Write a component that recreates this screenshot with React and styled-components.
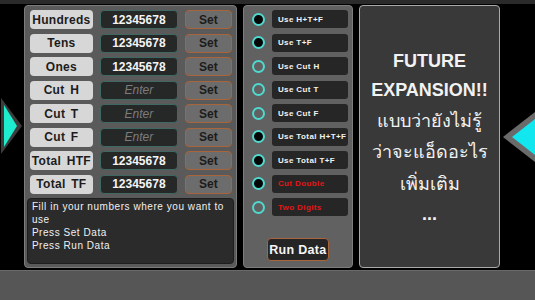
import React from 'react'
import styled, { createGlobalStyle } from 'styled-components'

const GlobalStyle = createGlobalStyle`
    html, body {
        margin: 0;
        padding: 0;
        background: #000000;
    }
    * {
        box-sizing: border-box;
    }
`;

const StyledScreen = styled.div`
    display: flex;
    flex-direction: column;
    width: 535px;
    height: 300px;
    background-color: #000000;
    font-family: "Liberation Sans", "Noto Sans", sans-serif;
    overflow: hidden;
`;

const StyledTopBar = styled.div`
    height: 4px;
    background-color: #2a2a2a;
`;

const StyledMain = styled.div`
    display: flex;
    height: 264px;
    padding-top: 1px;
`;

const StyledBottomBar = styled.div`
    flex: 1;
    margin-top: 2px;
    background-color: #565656;
    border-top: 1px solid #6a6a6a;
`;

const StyledArrowSlot = styled.div`
    display: flex;
    justify-content: ${props => props.$side === 'left' ? 'flex-start' : 'flex-end'};
    width: ${props => props.$width}px;
    padding-top: ${props => props.$top}px;
`;

const StyledPanel = styled.section`
    display: flex;
    flex-direction: column;
    width: ${props => props.$width}px;
    margin-right: ${props => props.$gap || 0}px;
    border: 1px solid ${props => props.$border};
    border-radius: 4px;
    background-color: ${props => props.$bg};
`;

const StyledLeftPanel = styled(StyledPanel)`
    padding: 4px 4px 3px 5px;
    gap: 4.5px;
`;

const StyledInputRow = styled.div`
    display: flex;
    align-items: center;
    gap: 7px;
    height: 19px;
`;

const StyledLabelButton = styled.div`
    display: flex;
    align-items: center;
    justify-content: center;
    width: 63px;
    height: 19px;
    border-radius: 4px;
    background-color: #d7d7d7;
    color: #1c1c1c;
    font-size: 12px;
    font-weight: bold;
    letter-spacing: 0.3px;
    word-spacing: 2px;
`;

const StyledNumberBox = styled.div`
    display: flex;
    align-items: center;
    justify-content: center;
    width: 78px;
    height: 19px;
    border: 1px solid #3f6862;
    border-radius: 4px;
    background-color: #262727;
    color: ${props => props.$empty ? '#7d7d7d' : '#f4f4f4'};
    font-size: 12px;
    font-weight: ${props => props.$empty ? 'normal' : 'bold'};
    font-style: ${props => props.$empty ? 'italic' : 'normal'};
`;

const StyledSetButton = styled.div`
    display: flex;
    align-items: center;
    justify-content: center;
    width: 47px;
    height: 19px;
    border: 1px solid #a8643a;
    border-radius: 4px;
    background-color: #6c6c6c;
    color: #1c1c1c;
    font-size: 12px;
    font-weight: bold;
`;

const StyledHelpBox = styled.div`
    flex: 1;
    margin: 0 -2px 0 -3px;
    padding: 1px 3px 1px 4px;
    border: 1px solid #1e1e1e;
    border-radius: 4px;
    background-color: #2b2b2b;
    color: #f0f0f0;
    font-size: 10px;
    line-height: 13px;
    letter-spacing: 0.55px;
`;

const StyledMidPanel = styled(StyledPanel)`
    padding: 4px 4px 6px 8px;
    gap: 5.5px;
`;

const StyledOptionRow = styled.div`
    display: flex;
    align-items: center;
    gap: 7px;
    height: 18px;
`;

const StyledRadio = styled.div`
    width: 13px;
    height: 13px;
    border: 2px solid #4fd9cf;
    border-radius: 50%;
    background-color: ${props => props.$checked ? '#050505' : 'transparent'};
`;

const StyledOptionLabel = styled.div`
    display: flex;
    align-items: center;
    width: 76px;
    height: 18px;
    padding-left: 6px;
    border-radius: 3px;
    background-color: #262626;
    color: ${props => props.$danger ? '#e01818' : '#f2f2f2'};
    font-size: 8px;
    font-weight: bold;
    letter-spacing: 0.4px;
    white-space: nowrap;
`;

const StyledRunButton = styled.div`
    display: flex;
    align-items: center;
    justify-content: center;
    align-self: flex-start;
    width: 62px;
    height: 23px;
    margin: auto 0 0 15px;
    border: 1px solid #a8643a;
    border-radius: 4px;
    background-color: #252525;
    color: #f6f6f6;
    font-size: 12.5px;
    font-weight: bold;
    letter-spacing: 0.3px;
`;

const StyledRightPanel = styled(StyledPanel)`
    align-items: center;
    padding-top: 41px;
    color: #f2f2f2;
    font-size: 18px;
    font-weight: bold;
    line-height: 29px;
    text-align: center;
`;

const StyledThaiLine = styled.div`
    font-family: "Noto Sans", "DejaVu Sans", sans-serif;
    font-weight: normal;
    font-size: 18px;
    line-height: ${props => props.$lh || 31}px;
`;

const inputRows = [
    {label: 'Hundreds', value: '12345678'},
    {label: 'Tens', value: '12345678'},
    {label: 'Ones', value: '12345678'},
    {label: 'Cut H', value: ''},
    {label: 'Cut T', value: ''},
    {label: 'Cut F', value: ''},
    {label: 'Total HTF', value: '12345678'},
    {label: 'Total TF', value: '12345678'}
];

const options = [
    {label: 'Use H+T+F', checked: true},
    {label: 'Use T+F', checked: true},
    {label: 'Use Cut H', checked: false},
    {label: 'Use Cut T', checked: false},
    {label: 'Use Cut F', checked: false},
    {label: 'Use Total H+T+F', checked: true},
    {label: 'Use Total T+F', checked: true},
    {label: 'Cut Double', checked: true, danger: true},
    {label: 'Two Digits', checked: false, danger: true}
];

const ArrowRight = () => (
    <svg width="23" height="58" viewBox="0 0 23 58">
        <polygon points="1,1 22,29 1,57" fill="#3c3c3c" />
        <polygon points="4,8 17,29 4,50" fill="#1eeccf" />
    </svg>
);

const ArrowLeft = () => (
    <svg width="33" height="50" viewBox="0 0 33 50">
        <polygon points="33,0 1,25 33,50" fill="#6a6a6a" />
        <polygon points="33,7 10,25 33,43" fill="#12e6ef" />
    </svg>
);

const App = () => {
    return (
        <StyledScreen>
            <GlobalStyle />
            <StyledTopBar />
            <StyledMain>
                <StyledArrowSlot $side="left" $width={24} $top={92}>
                    <ArrowRight />
                </StyledArrowSlot>
                <StyledLeftPanel $width={213} $gap={6} $bg="#5a5a5a" $border="#7c7c7c">
                    {inputRows.map(row => (
                        <StyledInputRow key={row.label}>
                            <StyledLabelButton>{row.label}</StyledLabelButton>
                            <StyledNumberBox $empty={!row.value}>{row.value || 'Enter'}</StyledNumberBox>
                            <StyledSetButton>Set</StyledSetButton>
                        </StyledInputRow>
                    ))}
                    <StyledHelpBox>
                        Fill in your numbers where you want to use<br />
                        Press Set Data<br />
                        Press Run Data
                    </StyledHelpBox>
                </StyledLeftPanel>
                <StyledMidPanel $width={110} $gap={6} $bg="#616161" $border="#7e7e7e">
                    {options.map(opt => (
                        <StyledOptionRow key={opt.label}>
                            <StyledRadio $checked={opt.checked} />
                            <StyledOptionLabel $danger={opt.danger}>{opt.label}</StyledOptionLabel>
                        </StyledOptionRow>
                    ))}
                    <StyledRunButton>Run Data</StyledRunButton>
                </StyledMidPanel>
                <StyledRightPanel $width={142} $bg="#393939" $border="#a9a9a9">
                    <div>FUTURE</div>
                    <div>EXPANSION!!</div>
                    <StyledThaiLine>แบบว่ายังไม่รู้</StyledThaiLine>
                    <StyledThaiLine>ว่าจะแอ็ดอะไร</StyledThaiLine>
                    <StyledThaiLine $lh={33}>เพิ่มเติม</StyledThaiLine>
                    <div>...</div>
                </StyledRightPanel>
                <StyledArrowSlot $side="right" $width={35} $top={107}>
                    <ArrowLeft />
                </StyledArrowSlot>
            </StyledMain>
            <StyledBottomBar />
        </StyledScreen>
    );
}

export default App;
